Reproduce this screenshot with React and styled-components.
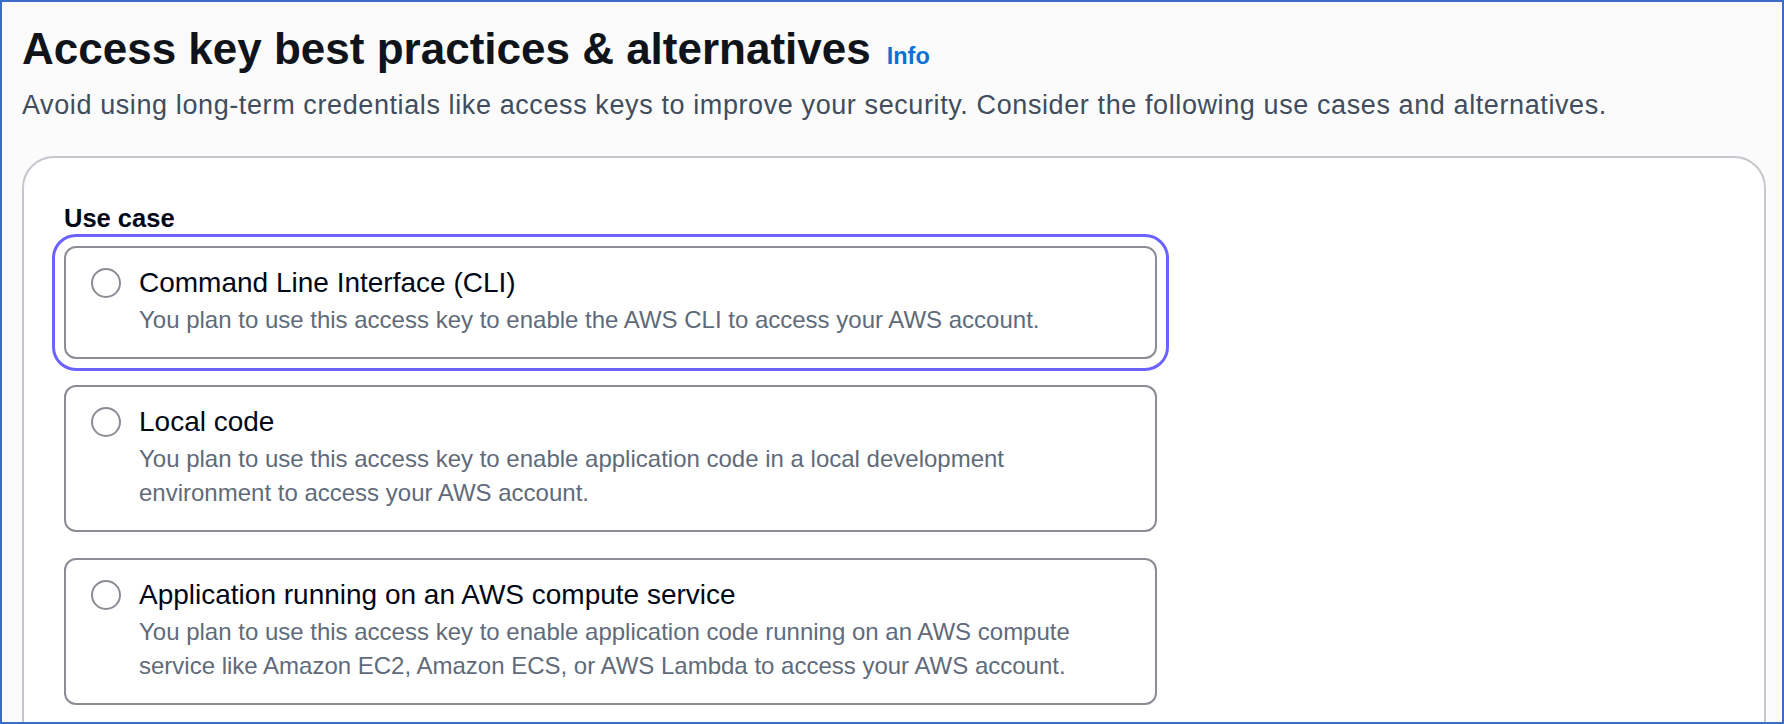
import React from 'react';
import styled, { createGlobalStyle } from 'styled-components';

/**
 * Define styles
 */

const GlobalStyle = createGlobalStyle`
  html, body {
    margin: 0;
    padding: 0;
    height: 100%;
  }
  body {
    font-family: "Liberation Sans", Arial, sans-serif;
    background: #fbfbfb;
  }
`

const Frame = styled.div`
  box-sizing: border-box;
  height: 100vh;
  border: 2px solid #3b6cc7;
  background: #fbfbfb;
  padding: 21px 16px 0 20px;
  overflow: hidden;
`

const Header = styled.div`
  display: flex;
  align-items: baseline;
  gap: 16px;
`

const Title = styled.h1`
  margin: 0;
  font-size: 44px;
  line-height: 52px;
  font-weight: 700;
  color: #0f141a;
`

const InfoLink = styled.a`
  font-size: 23.5px;
  font-weight: 700;
  color: #0972d3;
  text-decoration: none;
  cursor: pointer;
`

const Subtitle = styled.p`
  margin: 13px 0 0;
  font-size: 27px;
  letter-spacing: 0.6px;
  line-height: 34px;
  color: #414d5c;
`

const Card = styled.section`
  margin-top: 34px;
  background: #fff;
  border: 2px solid #c6c6cd;
  border-radius: 32px;
  padding: 45px 40px 80px;
`

const Label = styled.div`
  font-size: 25.5px;
  line-height: 30px;
  font-weight: 700;
  color: #000716;
  margin-bottom: 13px;
`

const Options = styled.div`
  display: flex;
  flex-direction: column;
  gap: 26px;
  max-width: 1093px;
`

const Tile = styled.label`
  display: flex;
  gap: 18px;
  padding: 18px 24px 20px 25px;
  background: #fff;
  border: 2px solid #8c8c94;
  border-radius: 12px;
  cursor: pointer;
  outline: ${p => (p.$focused ? '3px solid #6c63ff' : 'none')};
  outline-offset: 9px;
`

const Radio = styled.span`
  flex: none;
  box-sizing: border-box;
  width: 30px;
  height: 30px;
  margin-top: 2px;
  border: 2px solid #8c8c94;
  border-radius: 50%;
  background: #fff;
`

const Body = styled.div`
  display: flex;
  flex-direction: column;
  gap: 3px;
`

const OptionTitle = styled.div`
  font-size: 28px;
  line-height: 34px;
  color: #000716;
`

const OptionText = styled.div`
  font-size: 24px;
  line-height: 34px;
  color: #5f6b7a;
`

/**
 * Data
 */

const useCases = [
  {
    title: 'Command Line Interface (CLI)',
    lines: ['You plan to use this access key to enable the AWS CLI to access your AWS account.'],
    focused: true,
  },
  {
    title: 'Local code',
    lines: [
      'You plan to use this access key to enable application code in a local development',
      'environment to access your AWS account.',
    ],
  },
  {
    title: 'Application running on an AWS compute service',
    lines: [
      'You plan to use this access key to enable application code running on an AWS compute',
      'service like Amazon EC2, Amazon ECS, or AWS Lambda to access your AWS account.',
    ],
  },
];

/**
 * Define component
 */

function App() {
  return (
    <>
      <GlobalStyle />
      <Frame>
        <Header>
          <Title>Access key best practices &amp; alternatives</Title>
          <InfoLink>Info</InfoLink>
        </Header>
        <Subtitle>
          Avoid using long-term credentials like access keys to improve your security. Consider the following use cases and alternatives.
        </Subtitle>
        <Card>
          <Label>Use case</Label>
          <Options>
            {useCases.map(item => (
              <Tile key={item.title} $focused={item.focused}>
                <Radio />
                <Body>
                  <OptionTitle>{item.title}</OptionTitle>
                  <OptionText>
                    {item.lines.map((line, i) => (
                      <React.Fragment key={i}>
                        {i > 0 && <br />}
                        {line}
                      </React.Fragment>
                    ))}
                  </OptionText>
                </Body>
              </Tile>
            ))}
          </Options>
        </Card>
      </Frame>
    </>
  );
}

/**
 * Export component
 */

export default App;
